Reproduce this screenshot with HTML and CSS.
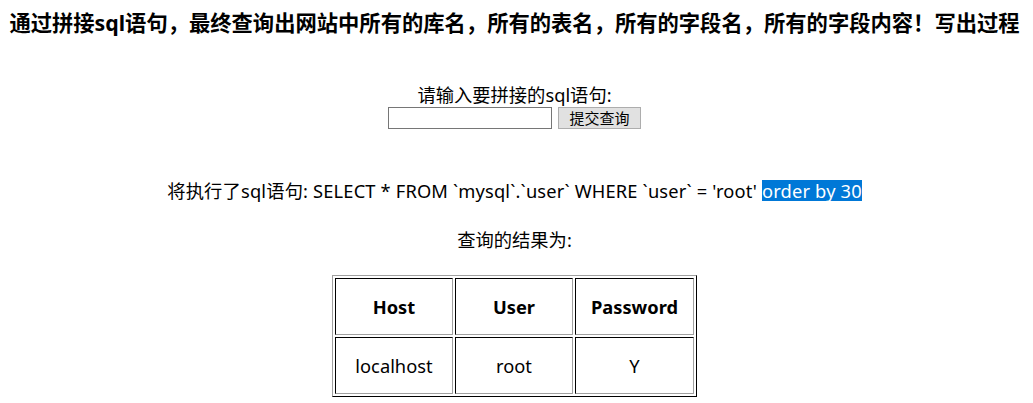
FILE: index.html
```html
<!DOCTYPE html>
<html lang="zh-CN">
<head>
<meta charset="utf-8">
<title>sql</title>
<link rel="stylesheet" href="styles.css">
</head>
<body>
<h3 class="title">通过拼接sql语句，最终查询出网站中所有的库名，所有的表名，所有的字段名，所有的字段内容！写出过程</h3>
<form class="query-form">
  <div class="label">请输入要拼接的sql语句:</div>
  <div class="controls">
    <input class="sql-input" type="text" name="sql"><button class="submit" type="button">提交查询</button>
  </div>
</form>
<p class="sql-line">将执行了sql语句: SELECT * FROM `mysql`.`user` WHERE `user` = 'root' <span class="hl">order by 30</span></p>
<p class="result-label">查询的结果为:</p>
<table class="result" border="1">
  <tr><th>Host</th><th>User</th><th>Password</th></tr>
  <tr><td>localhost</td><td>root</td><td>Y</td></tr>
</table>
</body>
</html>
```
FILE: styles.css
```css
body {
  margin: 8px 12px 8px 8px;
  font-family: "Noto Sans", "Noto Sans CJK SC", sans-serif;
  font-size: 18.3px;
  color: #000;
  background: #fff;
}
.title {
  margin: 0;
  font-size: 21.3px;
  line-height: 30px;
  font-weight: bold;
  text-align: center;
  white-space: nowrap;
}
.query-form {
  margin: 45px 0 0;
  text-align: center;
}
.label {
  line-height: 24px;
}
.controls {
  display: flex;
  justify-content: center;
  gap: 6px;
}
.sql-input {
  box-sizing: border-box;
  width: 164px;
  height: 22px;
  margin: 0;
  border: 1px solid #767676;
  background: #fff;
  padding: 0 2px;
}
.submit {
  box-sizing: border-box;
  width: 83px;
  height: 22px;
  margin: 0;
  padding: 0;
  border: 1px solid #adadad;
  background: #e1e1e1;
  font-family: "Noto Sans CJK SC", sans-serif;
  font-size: 15px;
  line-height: 20px;
  color: #000;
}
.sql-line {
  margin: 50px 0 0;
  line-height: 24px;
  text-align: center;
  letter-spacing: 0.16px;
}
.hl {
  display: inline-block;
  line-height: 21px;
  background: #0078d7;
  color: #fff;
}
.result-label {
  margin: 25px 0 0;
  line-height: 24px;
  text-align: center;
}
.result {
  margin: 23px auto 0;
  border-spacing: 2px;
  border-color: #a0a0a0 #555 #555 #a0a0a0;
}
.result th,
.result td {
  width: 86px;
  padding: 15px;
  line-height: 25px;
  text-align: center;
  border-color: #555 #a0a0a0 #a0a0a0 #555;
}
```
